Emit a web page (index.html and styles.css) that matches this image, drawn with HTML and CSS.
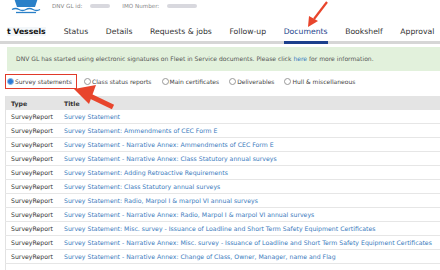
FILE: index.html
```html
<!DOCTYPE html>
<html lang="en">
<head>
  <meta charset="UTF-8" />
  <title>Fleet in Service - Documents</title>
  <link rel="stylesheet" href="styles.css">
</head>
<body>

  <header class="top">
    <svg class="logo" width="30" height="16" viewBox="0 0 30 16">
      <path d="M3 0 H27 L24 9 H6 Z" fill="#2a80c8"/>
      <path d="M1 11.5 Q4.5 9.5 8 11.5 T15 11.5 T22 11.5 T29 11.5" stroke="#2a80c8" stroke-width="1.3" fill="none"/>
      <path d="M5 14.5 H25" stroke="#2a80c8" stroke-width="1.3"/>
    </svg>
    <span class="meta">DNV GL id: <span class="blur"></span></span>
    <span class="meta">IMO Number: <span class="blur wide"></span></span>
  </header>

  <nav class="tabs">
    <span class="tab first">t Vessels</span>
    <span class="tab">Status</span>
    <span class="tab">Details</span>
    <span class="tab">Requests &amp; jobs</span>
    <span class="tab">Follow-up</span>
    <span class="tab active">Documents</span>
    <span class="tab">Bookshelf</span>
    <span class="tab">Approval</span>
  </nav>

  <div class="notice">
    DNV GL has started using electronic signatures on Fleet in Service documents. Please click <a href="#">here</a> for more information.
  </div>

  <div class="filters">
    <label class="radio picked"><span class="dot on"></span>Survey statements</label>
    <label class="radio"><span class="dot"></span>Class status reports</label>
    <label class="radio"><span class="dot"></span>Main certificates</label>
    <label class="radio"><span class="dot"></span>Deliverables</label>
    <label class="radio"><span class="dot"></span>Hull &amp; miscellaneous</label>
  </div>

  <table class="docs">
    <thead>
      <tr><th class="type">Type</th><th>Title</th></tr>
    </thead>
    <tbody>
      <tr><td>SurveyReport</td><td><a href="#">Survey Statement</a></td></tr>
      <tr><td>SurveyReport</td><td><a href="#">Survey Statement: Ammendments of CEC Form E</a></td></tr>
      <tr><td>SurveyReport</td><td><a href="#">Survey Statement - Narrative Annex: Ammendments of CEC Form E</a></td></tr>
      <tr><td>SurveyReport</td><td><a href="#">Survey Statement - Narrative Annex: Class Statutory annual surveys</a></td></tr>
      <tr><td>SurveyReport</td><td><a href="#">Survey Statement: Adding Retroactive Requirements</a></td></tr>
      <tr><td>SurveyReport</td><td><a href="#">Survey Statement: Class Statutory annual surveys</a></td></tr>
      <tr><td>SurveyReport</td><td><a href="#">Survey Statement: Radio, Marpol I &amp; marpol VI annual surveys</a></td></tr>
      <tr><td>SurveyReport</td><td><a href="#">Survey Statement - Narrative Annex: Radio, Marpol I &amp; marpol VI annual surveys</a></td></tr>
      <tr><td>SurveyReport</td><td><a href="#">Survey Statement: Misc. survey - Issuance of Loadline and Short Term Safety Equipment Certificates</a></td></tr>
      <tr><td>SurveyReport</td><td><a href="#">Survey Statement - Narrative Annex: Misc. survey - Issuance of Loadline and Short Term Safety Equipment Certificates</a></td></tr>
      <tr><td>SurveyReport</td><td><a href="#">Survey Statement - Narrative Annex: Change of Class, Owner, Manager, name and Flag</a></td></tr>
      <tr class="spacer"><td></td><td></td></tr>
    </tbody>
  </table>

  <!-- callout arrows drawn over the screenshot -->
  <svg class="arrows" width="440" height="270" viewBox="0 0 440 270">
    <line x1="327" y1="2" x2="314" y2="19" stroke="#e8452c" stroke-width="2.2"/>
    <polygon points="308,27 309,16 318,21" fill="#e8452c"/>
    <line x1="113" y1="107" x2="90" y2="96" stroke="#e8452c" stroke-width="5"/>
    <polygon points="74,89 96,85 89,104" fill="#e8452c"/>
  </svg>

</body>
</html>
```

FILE: styles.css
```css
body {
  margin: 0;
  font-family: "DejaVu Sans", Verdana, sans-serif;
  background: #fff;
  color: #333;
  width: 440px;
  height: 270px;
  overflow: hidden;
  position: relative;
}

.top {
  display: flex;
  align-items: flex-start;
  height: 21px;
  padding-left: 11px;
}

.logo {
  margin-top: -2px;
  margin-right: 11px;
}

.meta {
  font-size: 5.6px;
  color: #888;
  margin-top: 3px;
  margin-right: 12px;
  display: flex;
  align-items: center;
}

.blur {
  display: inline-block;
  width: 20px;
  height: 4px;
  margin-left: 8px;
  background: #d8d8de;
  border-radius: 2px;
  filter: blur(0.6px);
}

.blur.wide {
  width: 30px;
}

.tabs {
  display: flex;
  height: 20px;
  align-items: center;
  border-bottom: 3px solid #d6d6d6;
  padding-left: 7px;
  font-size: 7.7px;
  color: #333;
}

.tab {
  position: relative;
  white-space: nowrap;
  margin-right: 17.6px;
}

.tab.first {
  font-weight: bold;
  color: #111;
  background: #f3f7fa;
  margin-right: 18px;
}

.tab.active {
  color: #1c3f8c;
}

.tab.active::after {
  content: "";
  position: absolute;
  left: 0;
  right: 0;
  bottom: -8px;
  height: 3px;
  background: #1c3f8c;
}

.notice {
  margin: 3px 0 0 7px;
  background: #e2f1dc;
  color: #555;
  font-size: 6.05px;
  height: 24px;
  line-height: 24px;
  padding-left: 9px;
  white-space: nowrap;
}

.notice a {
  color: #3a7dbf;
  text-decoration: none;
}

.filters {
  display: flex;
  align-items: center;
  margin: 3px 0 0 5px;
  height: 15px;
  font-size: 6px;
  color: #444;
}

.radio {
  display: flex;
  align-items: center;
  height: 15px;
  margin-right: 10px;
  white-space: nowrap;
}

.radio.picked {
  border: 1.5px solid #e03a2a;
  box-sizing: border-box;
  padding: 0 3px 0 1px;
  width: 72px;
  margin-right: 7px;
}

.dot {
  width: 7px;
  height: 7px;
  border: 1px solid #999;
  border-radius: 50%;
  margin-right: 1px;
  box-sizing: border-box;
  background: #fff;
}

.dot.on {
  border: 1.5px solid #8fb8e6;
  background: #2a7bd8;
}

.docs {
  margin: 7px 0 0 5px;
  border-collapse: collapse;
  width: calc(100% - 5px);
  font-size: 6.2px;
  border-left: 1px solid #e2e2e2;
}

.docs th {
  background: #e4e4e4;
  text-align: left;
  font-weight: bold;
  color: #333;
  height: 14px;
  padding: 0 5px;
}

.docs th.type {
  width: 43px;
}

.docs td {
  height: 13px;
  padding: 0 5px;
  border-bottom: 1px solid #e6e6e6;
  white-space: nowrap;
}

.docs a {
  color: #3b7bbd;
  text-decoration: none;
}

.arrows {
  position: absolute;
  left: 0;
  top: 0;
  pointer-events: none;
}
```
